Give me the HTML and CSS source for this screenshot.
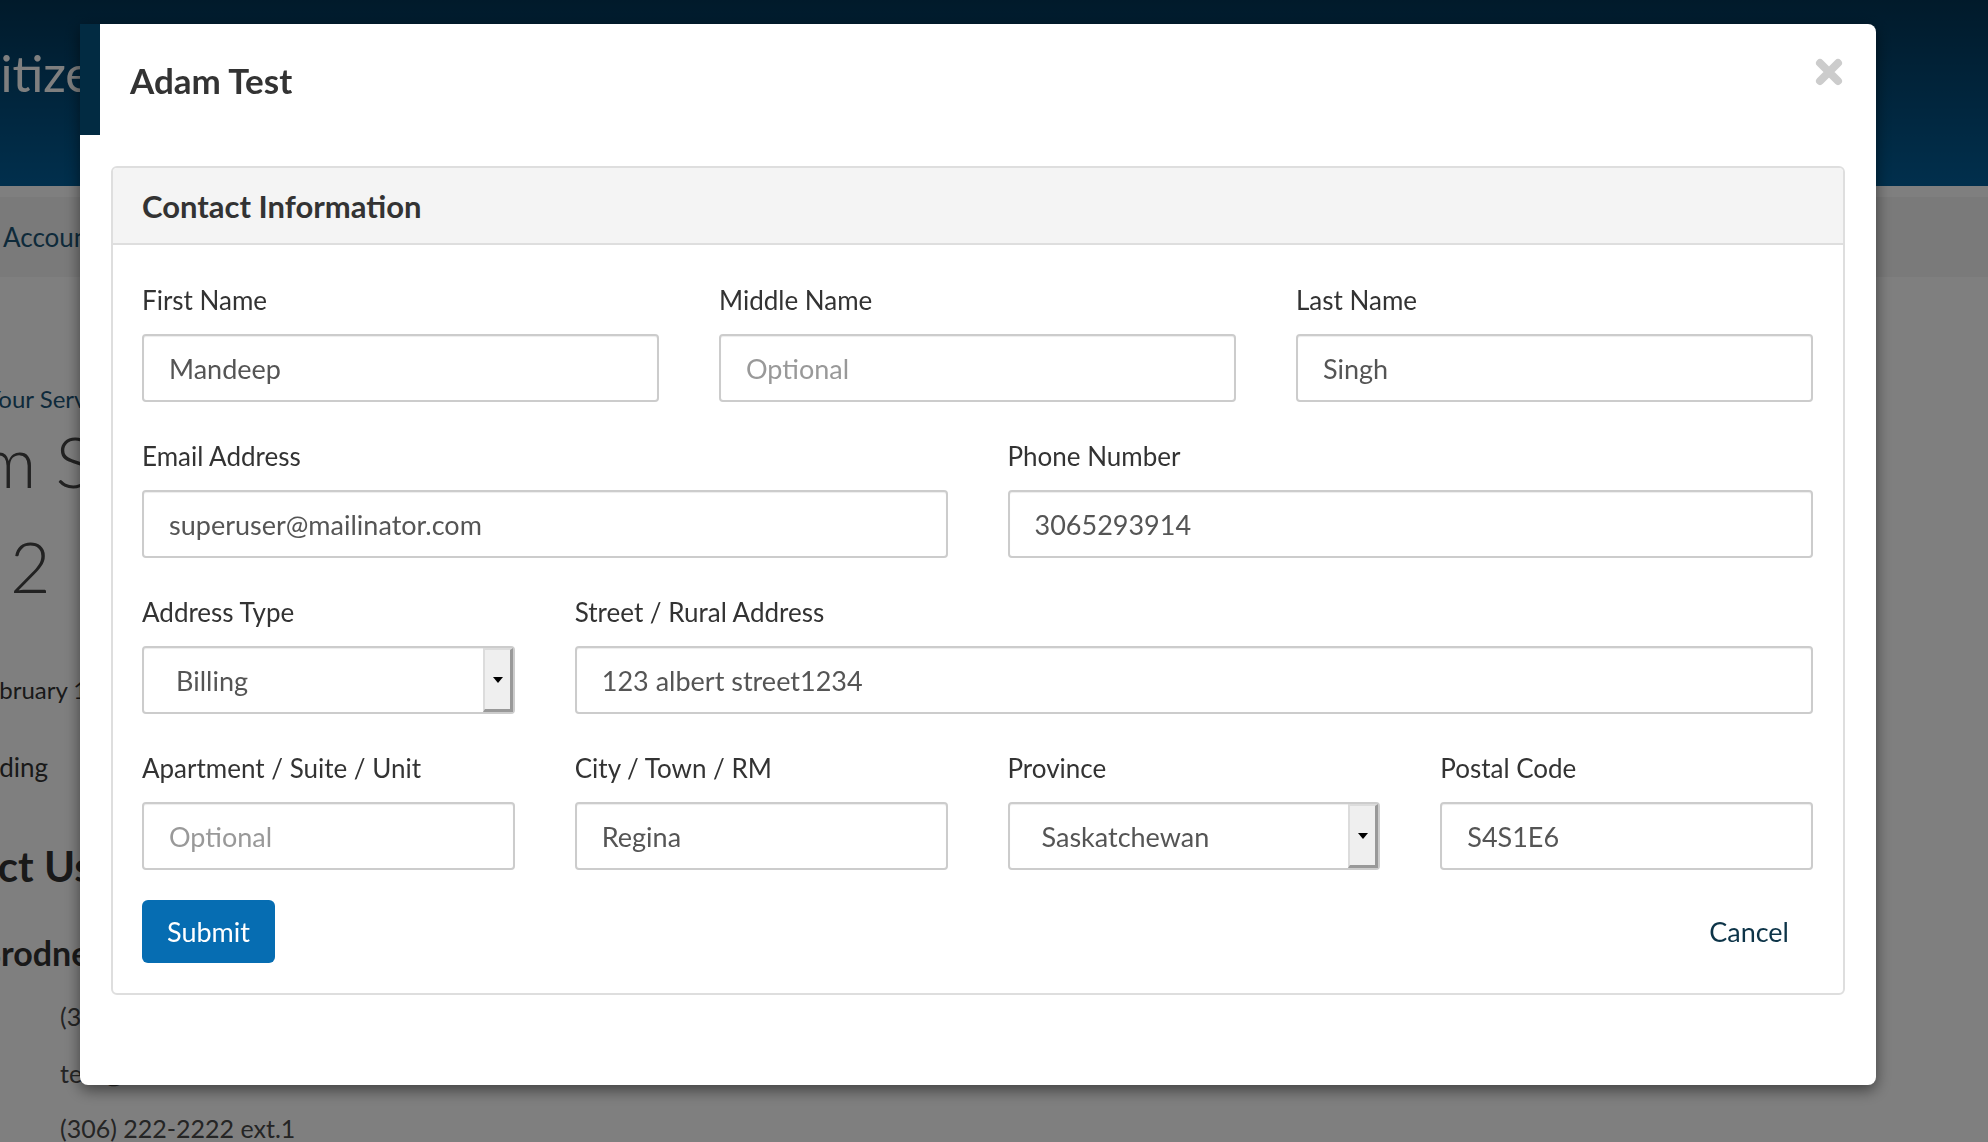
FILE: index.html
```html
<!DOCTYPE html>
<html lang="en">
<head>
<meta charset="utf-8">
<title>Adam Test - Contact Information</title>
<link rel="stylesheet" href="styles.css">
</head>
<body>
<div class="page">
  <header class="site-header">
    <div class="brand">Citizen Services</div>
  </header>
  <nav class="site-nav">
    <a class="nav-link">Account Details</a>
  </nav>
  <main class="site-main">
    <p class="l-services">Your Services</p>
    <h1 class="l-hero">Program Status</h1>
    <p class="l-num">2</p>
    <p class="l-date">February 12, 2024</p>
    <p class="l-pending">Pending</p>
    <h2 class="l-contact">Contact Us</h2>
    <h3 class="l-name">Brodney Smith</h3>
    <p class="l-line">(306) 111-1111</p>
    <p class="l-line">test@mailinator.com</p>
    <p class="l-line l-last">(306) 222-2222 ext.1</p>
  </main>
</div>

<div class="backdrop">
  <div class="modal" role="dialog">
    <div class="modal-header">
      <h2 class="modal-title">Adam Test</h2>
      <button class="close" type="button" aria-label="Close">
        <svg width="28" height="28" viewBox="0 0 28 28"><path d="M5 5 L23 23 M23 5 L5 23" stroke="#cccccc" stroke-width="8" stroke-linecap="round" fill="none"/></svg>
      </button>
    </div>
    <div class="modal-body">
      <section class="panel">
        <div class="panel-heading">
          <h3 class="panel-title">Contact Information</h3>
        </div>
        <form class="panel-body">
          <div class="form-grid">
            <div class="fg span-4">
              <label>First Name</label>
              <input class="form-control" type="text" value="Mandeep">
            </div>
            <div class="fg span-4">
              <label>Middle Name</label>
              <input class="form-control" type="text" placeholder="Optional">
            </div>
            <div class="fg span-4">
              <label>Last Name</label>
              <input class="form-control" type="text" value="Singh">
            </div>
            <div class="fg span-6">
              <label>Email Address</label>
              <input class="form-control" type="text" value="superuser@mailinator.com">
            </div>
            <div class="fg span-6">
              <label>Phone Number</label>
              <input class="form-control" type="text" value="3065293914">
            </div>
            <div class="fg span-3">
              <label>Address Type</label>
              <div class="select-wrap">
                <select class="form-control select"><option>Billing</option></select>
              </div>
            </div>
            <div class="fg span-9">
              <label>Street / Rural Address</label>
              <input class="form-control" type="text" value="123 albert street1234">
            </div>
            <div class="fg span-3">
              <label>Apartment / Suite / Unit</label>
              <input class="form-control" type="text" placeholder="Optional">
            </div>
            <div class="fg span-3">
              <label>City / Town / RM</label>
              <input class="form-control" type="text" value="Regina">
            </div>
            <div class="fg span-3">
              <label>Province</label>
              <div class="select-wrap">
                <select class="form-control select"><option>Saskatchewan</option></select>
              </div>
            </div>
            <div class="fg span-3">
              <label>Postal Code</label>
              <input class="form-control" type="text" value="S4S1E6">
            </div>
          </div>
          <div class="form-actions">
            <button class="btn btn-primary" type="button">Submit</button>
            <button class="btn btn-link" type="button">Cancel</button>
          </div>
        </form>
      </section>
    </div>
  </div>
</div>
</body>
</html>
```

FILE: styles.css
```css
html, body {
  margin: 0;
  padding: 0;
}
body {
  width: 1988px;
  height: 1142px;
  overflow: hidden;
  background: #ffffff;
  font-family: Lato, "Liberation Sans", sans-serif;
  color: #333333;
}

/* ---------- background page ---------- */
.page {
  height: 1142px;
  overflow: hidden;
}
.site-header {
  height: 186px;
  background: linear-gradient(180deg, #033556 0%, #025f9a 100%);
  display: flex;
  align-items: flex-start;
}
.brand {
  margin-top: 43px;
  font-size: 50px;
  line-height: 1.2;
  color: #ffffff;
  text-indent: -33px;
  white-space: nowrap;
}
.site-nav {
  margin-top: 11px;
  height: 80px;
  background: #f4f4f4;
  line-height: 80px;
  font-size: 26px;
  padding-left: 3px;
}
.nav-link {
  color: #1c5474;
}
.site-main {
  white-space: nowrap;
}
.site-main p,
.site-main h1,
.site-main h2,
.site-main h3 {
  margin: 0;
  line-height: 1.2;
}
.site-main .l-services {
  margin-top: 108px;
  font-size: 24px;
  color: #1c5476;
  text-indent: -14px;
}
.site-main .l-hero {
  margin-top: 5px;
  font-size: 70px;
  font-weight: 300;
  color: #444444;
  text-indent: -215px;
}
.site-main .l-num {
  margin-top: 21px;
  font-size: 70px;
  font-weight: 300;
  color: #444444;
  padding-left: 10px;
}
.site-main .l-date {
  margin-top: 68px;
  font-size: 24px;
  color: #333333;
  text-indent: -26px;
}
.site-main .l-pending {
  margin-top: 47px;
  font-size: 26px;
  color: #333333;
  text-indent: -44px;
}
.site-main .l-contact {
  margin-top: 58px;
  font-size: 42px;
  font-weight: 700;
  color: #333333;
  text-indent: -114px;
}
.site-main .l-name {
  margin-top: 42px;
  font-size: 34px;
  font-weight: 700;
  color: #333333;
  text-indent: -21px;
}
.site-main .l-line {
  margin-top: 27px;
  font-size: 25px;
  color: #4a4a4a;
  padding-left: 60px;
}
.site-main .l-last {
  margin-top: 25px;
}

/* ---------- modal ---------- */
.backdrop {
  position: fixed;
  inset: 0;
  background: rgba(0, 0, 0, 0.5);
}
.modal {
  position: absolute;
  left: 80px;
  top: 24px;
  width: 1796px;
  background: #ffffff;
  border-radius: 0 8px 8px 8px;
  box-shadow: 0 5px 15px rgba(0, 0, 0, 0.5);
}
.modal-header {
  position: relative;
  height: 111px;
  box-sizing: border-box;
  border-left: 20px solid #022b42;
  padding: 0 30px;
  display: flex;
  align-items: center;
}
.modal-title {
  margin: 0;
  font-size: 35px;
  font-weight: 700;
  color: #333333;
}
.close {
  position: absolute;
  right: 33px;
  top: 34px;
  width: 28px;
  height: 28px;
  padding: 0;
  border: 0;
  background: none;
}
.close svg {
  display: block;
}
.modal-body {
  padding: 31px 31px 90px;
}

.panel {
  border: 2px solid #dedede;
  border-radius: 6px;
}
.panel-heading {
  height: 77px;
  box-sizing: border-box;
  background: #f4f4f4;
  border-bottom: 2px solid #dedede;
  border-radius: 4px 4px 0 0;
  padding: 0 29px;
  display: flex;
  align-items: center;
}
.panel-title {
  margin: 0;
  font-size: 31px;
  font-weight: 700;
  color: #333333;
}
.panel-body {
  display: block;
  margin: 0;
  padding: 35px 30px 30px 29px;
}

.form-grid {
  display: grid;
  grid-template-columns: repeat(12, 1fr);
  column-gap: 60px;
  row-gap: 34px;
}
.span-3 { grid-column: span 3; }
.span-4 { grid-column: span 4; }
.span-6 { grid-column: span 6; }
.span-9 { grid-column: span 9; }

.fg label {
  display: block;
  font-size: 26px;
  line-height: 40px;
  margin-bottom: 14px;
  color: #333333;
  white-space: nowrap;
}
.form-control {
  display: block;
  width: 100%;
  height: 68px;
  box-sizing: border-box;
  margin: 0;
  border: 2px solid #cccccc;
  border-radius: 4px;
  padding: 0 25px;
  font-family: Lato, "Liberation Sans", sans-serif;
  font-size: 27px;
  color: #555555;
  background: #ffffff;
  box-shadow: inset 0 1px 1px rgba(0, 0, 0, 0.075);
  outline: none;
}
.form-control::placeholder {
  color: #999999;
  opacity: 1;
}
.select {
  appearance: none;
  -webkit-appearance: none;
  padding-left: 32px;
}
.select-wrap {
  position: relative;
}
.select-wrap::before {
  content: "";
  position: absolute;
  top: 2px;
  bottom: 2px;
  right: 2px;
  width: 30px;
  box-sizing: border-box;
  background: #efefef;
  border-style: solid;
  border-width: 2px 3px 3px 2px;
  border-color: #dcdcdc #999999 #999999 #dcdcdc;
  pointer-events: none;
}
.select-wrap::after {
  content: "";
  position: absolute;
  right: 12px;
  top: 50%;
  margin-top: -3px;
  width: 0;
  height: 0;
  border-left: 5px solid transparent;
  border-right: 5px solid transparent;
  border-top: 6px solid #000000;
  pointer-events: none;
}

.form-actions {
  margin-top: 30px;
  display: flex;
  justify-content: space-between;
  align-items: center;
}
.btn {
  height: 63px;
  border: 0;
  border-radius: 6px;
  padding: 0 25px;
  font-family: Lato, "Liberation Sans", sans-serif;
  font-size: 27px;
  cursor: pointer;
}
.btn-primary {
  background: #066db2;
  color: #ffffff;
}
.btn-link {
  background: none;
  color: #0d3448;
  padding: 0 24px;
}
```
